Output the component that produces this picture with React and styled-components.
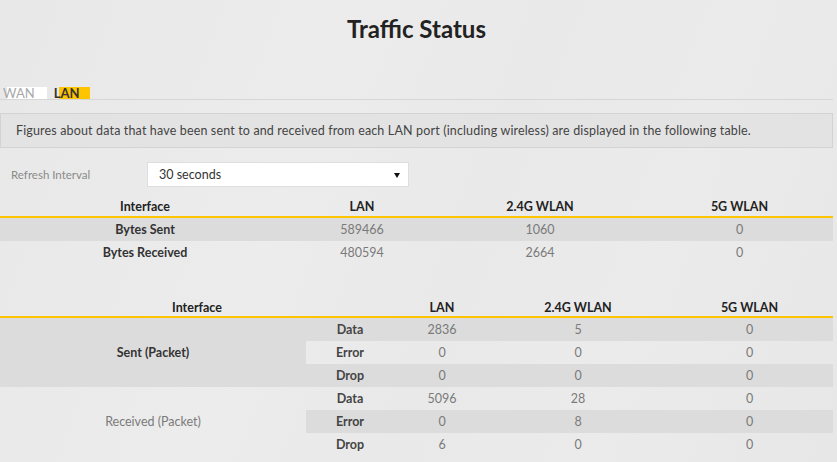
import React from "react";
import styled, { createGlobalStyle } from "styled-components";

const GlobalStyle = createGlobalStyle`
  html, body {
    margin: 0;
    padding: 0;
  }
  body {
    background: linear-gradient(110deg, #e8e8e8 0%, #ececec 35%, #e9e9e9 55%, #ebebeb 75%, #e7e7e7 100%);
    font-family: Lato, "Liberation Sans", sans-serif;
    color: #333;
    min-height: 462px;
  }
`;

const Page = styled.div`
  width: 833px;
  min-height: 462px;
`;

const Title = styled.h1`
  margin: 0;
  padding-top: 14px;
  height: 87px;
  box-sizing: border-box;
  font-size: 24px;
  line-height: 30px;
  font-weight: 700;
  text-align: center;
  color: #222;
`;

const Tabs = styled.div`
  display: flex;
  gap: 4px;
  height: 12px;
  border-bottom: 1px solid #d6d6d6;
`;

/* the tab colour block starts a few pixels right of the label */
const Tab = styled.div`
  padding: 0 ${p => (p.$active ? "11px" : "12px")} 0 3px;
  font-size: 13px;
  line-height: 12px;
  height: 12px;
  font-weight: ${p => (p.$active ? 700 : 400)};
  color: ${p => (p.$active ? "#333" : "#a8a8a8")};
  background: linear-gradient(
    to right,
    transparent ${p => (p.$active ? "8px" : "7px")},
    ${p => (p.$active ? "#ffc400" : "#ffffff")} ${p => (p.$active ? "8px" : "7px")}
  );
`;

const Note = styled.div`
  margin-top: 13px;
  height: 35px;
  box-sizing: border-box;
  border: 1px solid #d3d3d3;
  background: #e3e3e3;
  padding-left: 15px;
  font-size: 12.5px;
  letter-spacing: 0.15px;
  line-height: 33px;
  color: #444;
  white-space: nowrap;
`;

const Field = styled.div`
  display: flex;
  align-items: center;
  margin-top: 14px;
  height: 25px;
`;

const Label = styled.div`
  width: 147px;
  padding-left: 11px;
  box-sizing: border-box;
  font-size: 11.5px;
  color: #8a8a8a;
`;

const Select = styled.div`
  position: relative;
  width: 262px;
  height: 25px;
  box-sizing: border-box;
  border: 1px solid #dedede;
  background: #fff;
  padding-left: 11px;
  font-size: 12.5px;
  line-height: 23px;
  color: #333;
`;

const Caret = styled.span`
  position: absolute;
  right: 8px;
  top: 10px;
  width: 0;
  height: 0;
  border-left: 3px solid transparent;
  border-right: 3px solid transparent;
  border-top: 5px solid #111;
`;

const Table = styled.table`
  width: 833px;
  border-collapse: collapse;
  table-layout: fixed;
  margin-top: ${p => p.$gap}px;
  font-size: 12.5px;

  th {
    height: ${p => p.$head}px;
    padding: 0;
    font-weight: 700;
    color: #222;
    border-bottom: 2px solid #ffc400;
    text-align: center;
    vertical-align: middle;
  }
  td {
    height: 23px;
    padding: 0;
    text-align: center;
    vertical-align: middle;
    color: #7a7a7a;
  }
`;

const Col = styled.col`
  width: ${p => p.$w}px;
`;

const Row = styled.tr`
  td {
    background: ${p => (p.$shade ? "#dcdcdc" : "transparent")};
  }
`;

const Name = styled.td`
  && {
    font-weight: ${p => (p.$light ? 400 : 700)};
    color: ${p => (p.$light ? "#7a7a7a" : "#333")};
  }
`;

const Sub = styled.td`
  && {
    font-weight: 700;
    color: #444;
  }
`;

const bytes = [
  { name: "Bytes Sent", values: [589466, 1060, 0] },
  { name: "Bytes Received", values: [480594, 2664, 0] },
];

const packets = [
  {
    name: "Sent (Packet)",
    bold: true,
    rows: [
      ["Data", 2836, 5, 0],
      ["Error", 0, 0, 0],
      ["Drop", 0, 0, 0],
    ],
  },
  {
    name: "Received (Packet)",
    bold: false,
    rows: [
      ["Data", 5096, 28, 0],
      ["Error", 0, 8, 0],
      ["Drop", 6, 0, 0],
    ],
  },
];

export default function App() {
  let stripe = 0;
  return (
    <Page>
      <GlobalStyle />
      <Title>Traffic Status</Title>
      <Tabs>
        <Tab>WAN</Tab>
        <Tab $active>LAN</Tab>
      </Tabs>
      <Note>
        Figures about data that have been sent to and received from each LAN port (including wireless) are
        displayed in the following table.
      </Note>
      <Field>
        <Label>Refresh Interval</Label>
        <Select>
          30 seconds
          <Caret />
        </Select>
      </Field>

      <Table $gap={10} $head={19}>
        <colgroup>
          <Col $w={290} />
          <Col $w={144} />
          <Col $w={212} />
          <Col $w={187} />
        </colgroup>
        <thead>
          <tr>
            <th>Interface</th>
            <th>LAN</th>
            <th>2.4G WLAN</th>
            <th>5G WLAN</th>
          </tr>
        </thead>
        <tbody>
          {bytes.map((b, i) => (
            <Row key={b.name} $shade={i % 2 === 0}>
              <Name>{b.name}</Name>
              {b.values.map((v, j) => (
                <td key={j}>{v}</td>
              ))}
            </Row>
          ))}
        </tbody>
      </Table>

      <Table $gap={34} $head={18}>
        <colgroup>
          <Col $w={306} />
          <Col $w={88} />
          <Col $w={96} />
          <Col $w={176} />
          <Col $w={167} />
        </colgroup>
        <thead>
          <tr>
            <th colSpan={2}>Interface</th>
            <th>LAN</th>
            <th>2.4G WLAN</th>
            <th>5G WLAN</th>
          </tr>
        </thead>
        <tbody>
          {packets.map(group =>
            group.rows.map((r, i) => {
              const shade = stripe++ % 2 === 0;
              return (
                <Row key={group.name + r[0]} $shade={shade}>
                  {i === 0 && (
                    <Name rowSpan={3} $light={!group.bold}>
                      {group.name}
                    </Name>
                  )}
                  <Sub>{r[0]}</Sub>
                  <td>{r[1]}</td>
                  <td>{r[2]}</td>
                  <td>{r[3]}</td>
                </Row>
              );
            })
          )}
        </tbody>
      </Table>
    </Page>
  );
}
